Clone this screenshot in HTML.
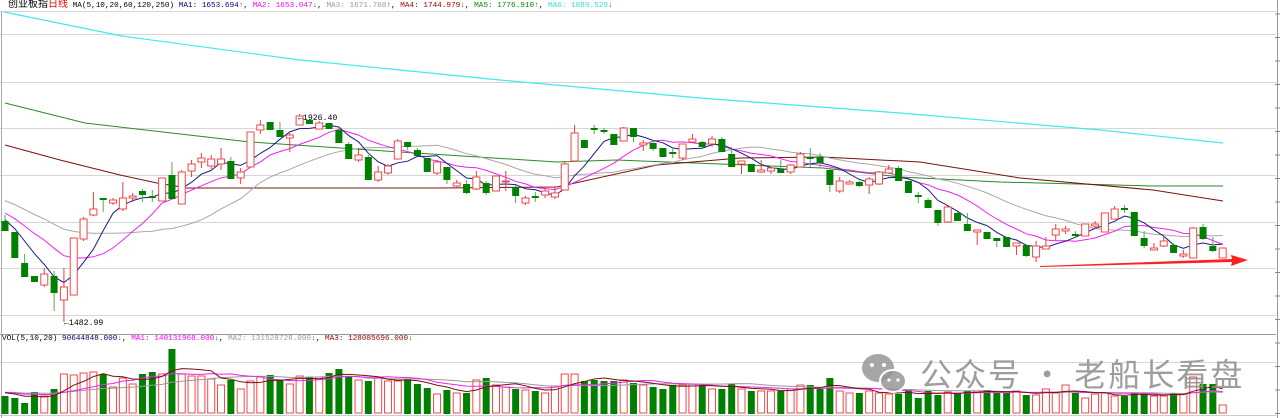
<!DOCTYPE html>
<html><head><meta charset="utf-8">
<style>
html,body{margin:0;padding:0;background:#fff;width:1280px;height:418px;overflow:hidden}
.h{position:absolute;font-family:"Liberation Mono","Noto Sans CJK SC",monospace;font-size:7.7px;white-space:pre;line-height:10px}
.cn{font-family:"Liberation Sans","Noto Sans CJK SC",sans-serif;font-size:10px}
svg{position:absolute;left:0;top:0}
</style></head><body>
<svg id="s" width="1280" height="418" xmlns="http://www.w3.org/2000/svg"></svg>
<div class="h" style="left:8px;top:0px"><span class="cn" style="color:#000">创业板指</span><span class="cn" style="color:#e00">日线</span> <span>MA(5,10,20,60,120,250)</span> <span style="color:#00007a">MA1: 1653.694</span><span style="color:#e00">↑</span>, <span style="color:#f0f">MA2: 1653.047</span><span style="color:#080">↓</span>, <span style="color:#999">MA3: 1671.768</span><span style="color:#e00">↑</span>, <span style="color:#900">MA4: 1744.979</span><span style="color:#080">↓</span>, <span style="color:#080">MA5: 1776.910</span><span style="color:#e00">↑</span>, <span style="color:#3dd">MA6: 1889.529</span><span style="color:#080">↓</span></div>
<div class="h" style="left:2px;top:334px">VOL(5,10,20) <span style="color:#00007a">90644848.000</span><span style="color:#080">↓</span>, <span style="color:#f0f">MA1: 140131968.000</span><span style="color:#080">↓</span>, <span style="color:#999">MA2: 131528728.000</span><span style="color:#080">↓</span>, <span style="color:#900">MA3: 128085696.000</span><span style="color:#080">↓</span></div>
<div class="h" style="left:298px;top:114px;font-size:8.2px">←1926.40</div>
<div class="h" style="left:64px;top:319px;font-size:8.2px">←1482.99</div>
<div style="position:absolute;left:920px;top:350px;font-family:'Noto Sans CJK SC',sans-serif;font-size:32px;color:rgba(140,140,140,0.85);white-space:nowrap;letter-spacing:2px">公众号 · 老船长看盘</div>
<script>
var C=[
['g',221,231,215,231],['g',232,258,232,258],['g',263,277,254,277],['g',276,282,276,282],['r',274,285,268,287],
['g',276,293,271,311],['r',287,300,268,322],['r',238,295,238,295],['r',219,239,217,241],['r',209,215,192,216],
['g',198,200,198,212],['r',200,203,198,205],['r',198,209,182,211],['r',196,198,193,202],['g',191,195,189,202],
['g',196,198,190,202],['r',178,201,178,201],['g',175,199,162,199],['r',172,204,170,204],['r',164,171,160,177],
['r',158,162,153,168],['r',159,166,155,169],['r',159,164,148,170],['g',161,179,157,179],['r',172,178,168,184],
['r',132,167,132,167],['r',125,130,120,134],['g',122,130,122,130],['g',130,137,122,137],['r',135,138,133,152],
['r',116,125,114,125],['g',120,124,120,124],['r',123,129,121,129],['g',123,129,123,129],['g',130,143,128,143],
['g',144,159,142,159],['r',155,160,148,162],['g',157,180,155,180],['r',172,180,166,182],['r',166,173,164,175],
['r',141,159,139,159],['g',142,147,142,150],['g',150,156,148,156],['g',158,172,158,172],['r',162,173,160,175],
['g',167,180,167,184],['r',183,186,180,187],['g',184,193,180,194],['r',177,189,171,190],['g',183,193,181,195],
['r',176,191,176,191],['r',181,182,171,191],['g',187,196,185,203],['r',198,203,196,205],['g',196,198,192,202],
['r',191,195,188,198],['r',193,197,186,199],['r',164,190,162,190],['r',133,161,125,161],['g',140,148,140,148],
['g',128,130,125,134],['g',130,132,128,134],['g',134,145,134,145],['r',128,141,127,141],['g',128,137,128,142],
['r',143,145,140,151],['g',143,149,140,151],['g',148,157,148,157],['g',152,154,149,158],['r',144,158,144,160],
['r',139,142,134,142],['g',142,147,141,148],['r',139,144,136,147],['g',139,152,137,152],['g',154,167,147,167],
['r',161,164,161,174],['g',164,172,164,172],['r',170,172,160,173],['r',168,171,168,174],['g',169,173,160,173],
['r',165,172,164,174],['r',154,167,152,167],['g',157,159,148,167],['g',157,163,153,167],['g',170,185,168,192],
['r',181,191,177,193],['r',182,184,180,184],['g',182,186,181,187],['r',179,185,177,194],['r',172,184,171,185],
['r',169,173,165,174],['g',168,181,166,181],['g',181,193,181,193],['g',195,197,192,203],['g',200,208,198,208],
['g',210,223,210,226],['r',207,222,206,223],['g',213,221,212,221],['g',224,231,213,231],['r',230,232,230,245],
['g',232,239,232,239],['g',238,241,238,247],['g',237,247,237,247],['r',243,246,243,255],['g',245,256,245,257],
['r',246,257,241,262],['r',246,249,237,249],['r',229,235,224,241],['r',229,231,226,234],['g',234,236,231,237],
['r',224,236,224,236],['r',224,226,221,229],['r',213,232,213,232],['r',209,219,206,219],['g',208,210,205,213],
['g',212,236,212,236],['g',238,246,231,248],['r',248,250,243,250],['r',241,246,236,247],['g',245,253,245,253],
['r',254,256,250,258],['r',228,258,227,258],['g',227,239,224,240],['g',246,251,237,252],['r',248,258,248,258]];
var V=[396,398,403,392,396,389,374,375,373,372,374,387,378,384,374,372,374,349,374,376,376,379,385,380,389,381,377,375,380,384,376,377,377,373,369,376,380,381,378,381,381,379,384,388,394,390,393,393,380,378,385,387,389,390,391,393,386,374,374,381,380,381,381,380,383,
385,387,389,385,385,384,385,389,389,384,389,391,391,391,391,389,385,385,389,378,391,393,393,391,393,394,394,389,398,391,395,392,393,391,391,390,393,393,391,395,395,389,393,385,393,398,394,393,396,396,393,394,396,396,393,394,377,384,384,405];
var s='',X=function(i){return 5+i*9.82};
function ln(x1,y1,x2,y2,c,w){s+='<line x1="'+x1+'" y1="'+y1+'" x2="'+x2+'" y2="'+y2+'" stroke="'+c+'" stroke-width="'+(w||1)+'"/>';}
[11,34,82,128,175,222,268,315,362].forEach(function(y){ln(0,y+.5,1276,y+.5,'#d6d6d6')});
ln(0,334.5,1276,334.5,'#999');ln(0,415.5,1276,415.5,'#ccc');
ln(1.5,11,1.5,418,'#aaa');ln(1277.5,0,1277.5,418,'#999');
for(var t=14;t<418;t+=23.5){ln(1275,t,1280,t,'#888')}
function pl(pts,c,w){s+='<polyline fill="none" stroke="'+c+'" stroke-width="'+(w||1)+'" points="'+pts.map(function(p){return p.join(',')}).join(' ')+'"/>';}
pl([[4,12],[122,36],[300,60],[500,80],[700,98],[900,113],[1100,130],[1223,143]],'#40e8f0',1.2);
pl([[5,103],[85,123],[250,142],[400,152],[557,162],[617,160],[823,168],[900,177],[1000,182],[1153,186],[1223,186]],'#2a8a2a');
pl([[5,145],[60,160],[120,175],[157,183],[187,188],[440,188],[557,187],[657,165],[740,158],[823,157],[920,162],[1020,178],[1153,190],[1223,201]],'#7a1010');
function ma(arr,n,pre){var out=[];var a=pre.concat(arr);for(var i=pre.length;i<a.length;i++){var k=0,m=0;for(var j=i;j>i-n&&j>=0;j--){k+=a[j];m++}out.push([X(i-pre.length).toFixed(1),(k/m).toFixed(1)])}return out;}
var cl=C.map(function(c){return c[0]=='r'?c[1]:c[2]});
var pre=[];for(var i=0;i<20;i++)pre.push(175+i*2.4);
pl(ma(cl,20,pre),'#a8a8a8');pl(ma(cl,10,pre),'#ee22ee');pl(ma(cl,5,pre),'#1a1a80');
C.forEach(function(c,i){var x=X(i),col=c[0]=='r'?'#f04848':'#008000';
ln(x,c[3],x,c[4],c[0]=='r'?'#e04040':'#55aa55');
var h=Math.max(1,c[2]-c[1]);
if(c[0]=='r'){s+='<rect x="'+(x-3.5)+'" y="'+c[1]+'" width="7" height="'+h+'" fill="#fff" stroke="'+col+'"/>'}
else s+='<rect x="'+(x-3.5)+'" y="'+c[1]+'" width="7" height="'+h+'" fill="'+col+'"/>';});
C.forEach(function(c,i){var x=X(i),y=V[i];
if(c[0]=='r')s+='<rect x="'+(x-3.5)+'" y="'+y+'" width="7" height="'+(413-y)+'" fill="none" stroke="#f04848"/>';
else s+='<rect x="'+(x-3.5)+'" y="'+y+'" width="7" height="'+(414-y)+'" fill="#008000"/>';});
var vp=[];for(i=0;i<20;i++)vp.push(392);
pl(ma(V,20,vp),'#999');pl(ma(V,10,vp),'#ee22ee');pl(ma(V,5,vp),'#7a1010');
s+='<polygon points="1040,266 1232,259 1231,255 1248,260 1231,266 1232,262 1040,267" fill="#ff2020"/>';
s+='<g fill="rgba(150,150,150,0.85)"><ellipse cx="878" cy="368" rx="16" ry="14"/><ellipse cx="893" cy="381" rx="13" ry="11" stroke="#fff" stroke-width="2"/></g><g fill="#fff"><circle cx="872" cy="365" r="2"/><circle cx="884" cy="365" r="2"/><circle cx="889" cy="380" r="1.6"/><circle cx="898" cy="380" r="1.6"/></g>';
document.getElementById('s').innerHTML=s;
</script>
</body></html>
